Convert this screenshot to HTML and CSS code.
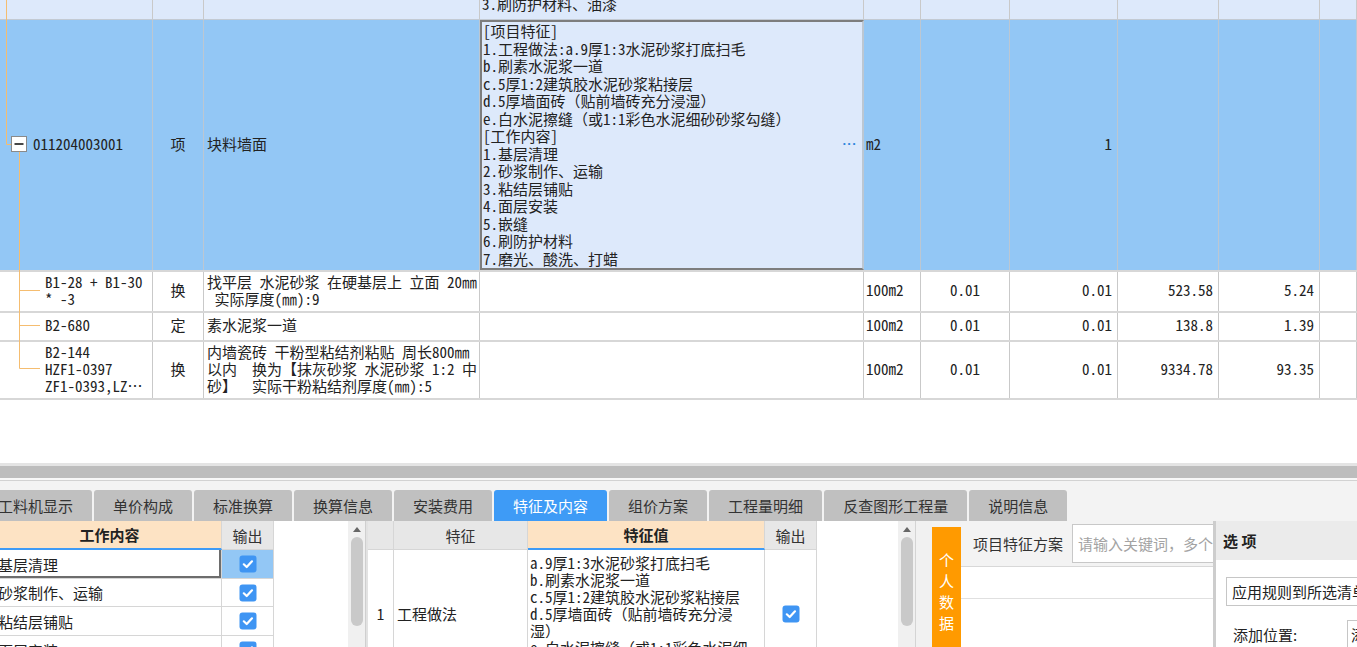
FILE: index.html
```html
<!DOCTYPE html>
<html lang="zh">
<head>
<meta charset="utf-8">
<title>清单编辑</title>
<link rel="stylesheet" href="styles.css">
</head>
<body>
<div class="app">
  <div class="grid-wrap">
    <div class="row r0">
      <div class="cell"></div><div class="cell"></div><div class="cell"></div>
      <div class="cell c-desc0"><div class="shift">3.刷防护材料、油漆</div></div>
      <div class="cell"></div><div class="cell"></div><div class="cell"></div><div class="cell"></div><div class="cell"></div><div class="cell"></div>
    </div>
    <div class="row r1">
      <div class="cell c-code1">011204003001</div>
      <div class="cell c-type">项</div>
      <div class="cell c-name">块料墙面</div>
      <div class="cell c-edit">
        <div class="edit-text">[项目特征]
1.工程做法:a.9厚1:3水泥砂浆打底扫毛
b.刷素水泥浆一道
c.5厚1:2建筑胶水泥砂浆粘接层
d.5厚墙面砖（贴前墙砖充分浸湿）
e.白水泥擦缝（或1:1彩色水泥细砂砂浆勾缝）
[工作内容]
1.基层清理
2.砂浆制作、运输
3.粘结层铺贴
4.面层安装
5.嵌缝
6.刷防护材料
7.磨光、酸洗、打蜡</div>
        <span class="more">···</span>
      </div>
      <div class="cell c-unit">m2</div>
      <div class="cell"></div>
      <div class="cell c-right">1</div>
      <div class="cell"></div><div class="cell"></div><div class="cell"></div>
    </div>
    <div class="row r2">
      <div class="cell c-code"><div>B1-28 + B1-30
* -3</div></div>
      <div class="cell c-type">换</div>
      <div class="cell c-name"><div>找平层 水泥砂浆 在硬基层上 立面 20㎜
 实际厚度(㎜):9</div></div>
      <div class="cell"></div>
      <div class="cell c-unit">100m2</div>
      <div class="cell c-center">0.01</div>
      <div class="cell c-right">0.01</div>
      <div class="cell c-right">523.58</div>
      <div class="cell c-right">5.24</div>
      <div class="cell"></div>
    </div>
    <div class="row r3">
      <div class="cell c-code">B2-680</div>
      <div class="cell c-type">定</div>
      <div class="cell c-name">素水泥浆一道</div>
      <div class="cell"></div>
      <div class="cell c-unit">100m2</div>
      <div class="cell c-center">0.01</div>
      <div class="cell c-right">0.01</div>
      <div class="cell c-right">138.8</div>
      <div class="cell c-right">1.39</div>
      <div class="cell"></div>
    </div>
    <div class="row r4">
      <div class="cell c-code"><div>B2-144
HZF1-0397
ZF1-0393,LZ…</div></div>
      <div class="cell c-type">换</div>
      <div class="cell c-name"><div>内墙瓷砖 干粉型粘结剂粘贴 周长800㎜
以内  换为【抹灰砂浆 水泥砂浆 1:2 中
砂】  实际干粉粘结剂厚度(㎜):5</div></div>
      <div class="cell"></div>
      <div class="cell c-unit">100m2</div>
      <div class="cell c-center">0.01</div>
      <div class="cell c-right">0.01</div>
      <div class="cell c-right">9334.78</div>
      <div class="cell c-right">93.35</div>
      <div class="cell"></div>
    </div>
    <svg class="tree" width="153" height="400" viewBox="0 0 153 400">
      <g stroke="#f5bd70" stroke-width="1" fill="none">
        <path d="M6.5 0 V144.5 H12"/>
        <path d="M19.5 152 V368.5 H40"/>
        <path d="M19.5 290.5 H40"/>
        <path d="M19.5 325.5 H40"/>
      </g>
      <rect x="11.5" y="136.5" width="15" height="15" fill="#fff" stroke="#8a8a8a"/>
      <path d="M14.5 144 H23.5" stroke="#1a1a1a" stroke-width="1.6"/>
    </svg>
  </div>

  <div class="blank"></div>
  <div class="splitter"></div>

  <div class="tabbar">
    <div class="tab">工料机显示</div>
    <div class="tab">单价构成</div>
    <div class="tab">标准换算</div>
    <div class="tab">换算信息</div>
    <div class="tab">安装费用</div>
    <div class="tab active">特征及内容</div>
    <div class="tab">组价方案</div>
    <div class="tab">工程量明细</div>
    <div class="tab">反查图形工程量</div>
    <div class="tab">说明信息</div>
  </div>

  <div class="panels">
    <div class="pa">
      <div class="ptable pa-table">
        <div class="prow phead">
          <div class="pc pa1 hot">工作内容</div>
          <div class="pc pa2 hcell">输出</div>
        </div>
        <div class="prow h29">
          <div class="pc pa1 sel">基层清理</div>
          <div class="pc pa2 selbg"><svg class="cb" viewBox="0 0 18 18"><rect x="0.5" y="0.5" width="17" height="17" rx="3" fill="#3f95f3"/><path d="M4.8 9.3 L7.7 12 L13 6.3" fill="none" stroke="#fff" stroke-width="2.2" stroke-linecap="round" stroke-linejoin="round"/></svg></div>
        </div>
        <div class="prow h28">
          <div class="pc pa1">砂浆制作、运输</div>
          <div class="pc pa2"><svg class="cb" viewBox="0 0 18 18"><rect x="0.5" y="0.5" width="17" height="17" rx="3" fill="#3f95f3"/><path d="M4.8 9.3 L7.7 12 L13 6.3" fill="none" stroke="#fff" stroke-width="2.2" stroke-linecap="round" stroke-linejoin="round"/></svg></div>
        </div>
        <div class="prow h29">
          <div class="pc pa1">粘结层铺贴</div>
          <div class="pc pa2"><svg class="cb" viewBox="0 0 18 18"><rect x="0.5" y="0.5" width="17" height="17" rx="3" fill="#3f95f3"/><path d="M4.8 9.3 L7.7 12 L13 6.3" fill="none" stroke="#fff" stroke-width="2.2" stroke-linecap="round" stroke-linejoin="round"/></svg></div>
        </div>
        <div class="prow h29">
          <div class="pc pa1">面层安装</div>
          <div class="pc pa2"><svg class="cb" viewBox="0 0 18 18"><rect x="0.5" y="0.5" width="17" height="17" rx="3" fill="#3f95f3"/><path d="M4.8 9.3 L7.7 12 L13 6.3" fill="none" stroke="#fff" stroke-width="2.2" stroke-linecap="round" stroke-linejoin="round"/></svg></div>
        </div>
      </div>
      <div class="pblank"></div>
      <div class="vscroll"><div class="up"></div><div class="thumb"></div></div>
    </div>

    <div class="divider"></div>

    <div class="pb">
      <div class="ptable pb-table">
        <div class="prow phead">
          <div class="pc pb0 hcell"></div>
          <div class="pc pb1 hcell">特征</div>
          <div class="pc pb2 hot">特征值</div>
          <div class="pc pb3 hcell">输出</div>
        </div>
        <div class="prow tall">
          <div class="pc pb0 mono">1</div>
          <div class="pc pb1 left">工程做法</div>
          <div class="pc pb2 val"><div>a.9厚1:3水泥砂浆打底扫毛
b.刷素水泥浆一道
c.5厚1:2建筑胶水泥砂浆粘接层
d.5厚墙面砖（贴前墙砖充分浸
湿）
e.白水泥擦缝（或1:1彩色水泥细
砂砂浆勾缝）</div></div>
          <div class="pc pb3"><svg class="cb" viewBox="0 0 18 18"><rect x="0.5" y="0.5" width="17" height="17" rx="3" fill="#3f95f3"/><path d="M4.8 9.3 L7.7 12 L13 6.3" fill="none" stroke="#fff" stroke-width="2.2" stroke-linecap="round" stroke-linejoin="round"/></svg></div>
        </div>
      </div>
      <div class="pblank pb-blank"></div>
      <div class="vscroll vs-b"><div class="up"></div><div class="thumb"></div></div>
    </div>

    <div class="pcx">
      <div class="strip"></div>
      <div class="otab"><span>个</span><span>人</span><span>数</span><span>据</span></div>
      <div class="pcx-main">
        <div class="pcx-head">
          <span class="pcx-label">项目特征方案</span>
          <div class="search">请输入关键词，多个关键词用空格隔开</div>
        </div>
        <div class="pcx-row"></div>
        <div class="pcx-rest"></div>
      </div>
    </div>

    <div class="pd">
      <div class="pd-head">选 项</div>
      <div class="pd-body">
        <div class="select">应用规则到所选清单项</div>
        <div class="pd-line">
          <span class="pd-label">添加位置:</span>
          <div class="pd-input">添加到项目特征列</div>
        </div>
      </div>
    </div>
  </div>
</div>
</body>
</html>
```

FILE: styles.css
```css
* { box-sizing: border-box; margin: 0; padding: 0; }
html, body { width: 1357px; height: 647px; overflow: hidden; background: #fff; }
body { font-family: "Noto Sans CJK SC", "Liberation Sans", sans-serif; color: #222; }

.app { display: flex; flex-direction: column; height: 647px; }

/* ---------- top grid ---------- */
.grid-wrap { position: relative; flex: none; height: 400px; }
.row {
  display: grid;
  grid-template-columns: 153px 51px 276px 384px 57px 89px 108px 101px 101px 37px;
  border-bottom: 2px solid #d7d7d7;
  font-family: "Noto Sans Mono CJK SC", "Noto Sans CJK SC", monospace;
  font-size: 15px;
  line-height: 17px;
  color: #222;
}
.cell {
  border-right: 1px solid #c9c9c9;
  overflow: hidden;
  white-space: pre;
  display: flex;
  align-items: center;
  padding-bottom: 4px;
}
.r0 { height: 20px; background: #dde9fb; border-bottom: 1px solid #c3cad3; }
.r0 .cell { align-items: flex-start; padding-bottom: 0; }
.c-desc0 { padding-left: 2px; }
.shift { margin-top: -5px; }
.r1 { height: 252px; background: #93c7f5; }
.r1 .cell { border-right-color: #bcc7d2; }
.r2 { height: 41px; }
.r3 { height: 29px; }
.r4 { height: 58px; }

.c-code1 { padding-left: 33px; }
.c-code { padding-left: 45px; }
.c-type { justify-content: center; }
.c-name { padding-left: 3px; }
.c-unit { padding-left: 2px; }
.c-center { justify-content: center; }
.c-right { justify-content: flex-end; padding-right: 5px; }

.c-edit {
  background: #dde9fb;
  border: 2px solid #7d7d7d;
  padding-left: 1px;
  padding-bottom: 0;
  align-items: center;
}
.edit-text { flex: 1; line-height: 17.5px; align-self: flex-start; }
.more {
  font-family: "Liberation Sans", sans-serif;
  font-size: 13px;
  font-weight: bold;
  color: #2f86dd;
  letter-spacing: 0.5px;
  margin-right: 5px;
  margin-bottom: 4px;
}

.tree { position: absolute; left: 0; top: 0; pointer-events: none; }

/* ---------- middle ---------- */
.blank { flex: none; height: 63px; background: #fff; }
.splitter {
  flex: none;
  height: 19px;
  background: linear-gradient(#e4e4e4 0 3px, #bdbdbd 3px 15px, #f8f8f8 15px 17px, #d2d2d2 17px 18px, #f3f3f3 18px);
}

.tabbar {
  flex: none;
  height: 39px;
  background: #f3f3f3;
  display: flex;
  align-items: flex-end;
  gap: 2px;
  margin-left: -21px;
}
.tab {
  height: 31px;
  padding: 0 19px;
  background: #c0c0c0;
  border-radius: 3px 3px 0 0;
  font-size: 15px;
  color: #333;
  display: flex;
  align-items: center;
  white-space: nowrap;
}
.tab.active { background: #3e9bf6; color: #fff; }

/* ---------- bottom panels ---------- */
.panels { flex: 1; display: flex; overflow: hidden; background: #f3f3f3; min-height: 0; }

.ptable { display: flex; flex-direction: column; background: #fff; font-size: 15px; color: #222; }
.prow { display: flex; border-bottom: 1px solid #d6d6d6; flex: none; }
.pc {
  border-right: 1px solid #d6d6d6;
  display: flex;
  align-items: center;
  justify-content: center;
  overflow: hidden;
  white-space: nowrap;
}
.phead { height: 29px; border-bottom: none; }
.phead .pc { border-bottom: 1px solid #d6d6d6; }
.hcell { background: #e7e7e7; color: #333; }
.hot { background: #fde3c4; font-weight: bold; border-bottom: 2px solid #3e9bf6 !important; }
.h29 { height: 29px; }
.h28 { height: 28px; }

.pa { display: flex; width: 365px; flex: none; }
.pa-table { width: 277px; margin-left: -3px; flex: none; }
.pa1 { width: 225px; justify-content: flex-start; padding-left: 1px; }
.phead .pa1 { justify-content: center; }
.pa2 { width: 52px; }
.sel { box-shadow: inset -2px -2px 0 #6d6d6d, inset 2px 0 0 #6d6d6d; }
.selbg { background: #93c7f5; }
.cb { width: 18px; height: 18px; display: block; }

.pblank { flex: 1; background: #fff; }
.vscroll {
  width: 17px;
  flex: none;
  background: #f0f0f0;
  display: flex;
  flex-direction: column;
  align-items: center;
  padding-top: 6px;
}
.up {
  width: 0; height: 0;
  border-left: 4px solid transparent;
  border-right: 4px solid transparent;
  border-bottom: 5px solid #666;
}
.thumb { width: 12px; height: 89px; margin-top: 5px; background: #c9c9c9; border-radius: 6px; }
.vs-b { width: 18px; border-right: 1px solid #d4d4d4; }

.divider { width: 3px; flex: none; background: #e2e2e2; border-left: 1px solid #cfcfcf; }

.pb { display: flex; width: 548px; flex: none; }
.pb-table { width: 449px; flex: none; }
.pb0 { width: 26px; }
.pb1 { width: 134px; }
.pb2 { width: 237px; }
.pb3 { width: 52px; }
.tall { height: 128px; }
.left { justify-content: flex-start; padding-left: 3px; }
.mono, .val { font-family: "Noto Sans Mono CJK SC", "Noto Sans CJK SC", monospace; }
.val { justify-content: flex-start; padding-left: 2px; white-space: pre; line-height: 17px; }

.pcx { width: 297px; flex: none; display: flex; overflow: hidden; }
.strip { width: 16px; flex: none; background: #f1f1f1; }
.otab {
  width: 29px;
  flex: none;
  margin-top: 6px;
  background: #ff9a00;
  color: #fff;
  font-size: 15px;
  display: flex;
  flex-direction: column;
  align-items: center;
  padding-top: 22px;
  line-height: 21px;
}
.pcx-main { flex: 1; display: flex; flex-direction: column; background: #fff; min-width: 0; }
.pcx-head {
  height: 46px;
  flex: none;
  background: #f3f3f3;
  border-bottom: 1px solid #d8d8d8;
  display: flex;
  align-items: center;
  padding-left: 12px;
  gap: 9px;
  overflow: hidden;
}
.pcx-label { font-size: 15px; color: #333; white-space: nowrap; flex: none; }
.search {
  height: 39px;
  flex: none;
  width: 142px;
  background: #fff;
  border: 1px solid #c8c8c8;
  border-right: none;
  font-size: 15px;
  color: #a3a3a3;
  padding-left: 5px;
  display: flex;
  align-items: center;
  white-space: nowrap;
  overflow: hidden;
}
.pcx-row { height: 32px; flex: none; border-bottom: 1px solid #e0e0e0; }
.pcx-rest { flex: 1; }

.pd { flex: 1; display: flex; flex-direction: column; border-left: 3px solid #cdcdcd; background: #fff; min-width: 0; overflow: hidden; }
.pd-head {
  height: 39px;
  flex: none;
  background: #ebebeb;
  font-size: 15px;
  font-weight: bold;
  color: #222;
  display: flex;
  align-items: center;
  padding-left: 7px;
  white-space: pre;
}
.pd-body { flex: 1; padding-top: 17px; padding-left: 10px; display: flex; flex-direction: column; }
.select {
  height: 29px;
  width: 200px;
  flex: none;
  border: 1px solid #c6c6c6;
  font-size: 15px;
  color: #222;
  display: flex;
  align-items: center;
  padding-left: 5px;
  white-space: nowrap;
  overflow: hidden;
}
.pd-line { display: flex; align-items: center; margin-top: 14px; height: 28px; }
.pd-label { font-size: 15px; color: #222; padding-left: 7px; width: 121px; flex: none; white-space: nowrap; }
.pd-input {
  height: 28px;
  width: 150px;
  flex: none;
  border: 1px solid #c6c6c6;
  font-size: 15px;
  padding-left: 3px;
  display: flex;
  align-items: center;
  white-space: nowrap;
  overflow: hidden;
}
```
